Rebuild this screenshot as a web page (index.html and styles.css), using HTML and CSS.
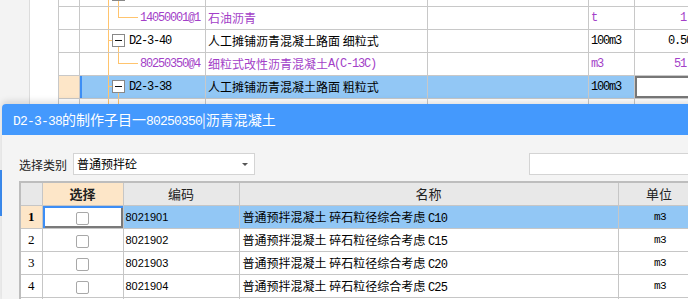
FILE: index.html
```html
<!DOCTYPE html>
<html lang="zh-CN">
<head>
    <meta charset="UTF-8">
    <title>制作子目</title>
    <link rel="stylesheet" href="styles.css">
</head>
<body>
    <div class="page">
        <aside class="side"><div class="side-mark"></div></aside>
        <div class="gutter"></div>
        <!-- main quota tree grid -->
        <table class="tree-grid">
            <colgroup>
                <col class="c-no"><col class="c-code"><col class="c-name"><col class="c-spec"><col class="c-unit"><col class="c-qty">
            </colgroup>
            <tr>
                <td></td>
                <td class="tc"><span class="ln"></span><span class="hz"></span><span class="box"></span><span class="dn"></span></td>
                <td></td><td></td><td></td><td></td>
            </tr>
            <tr class="mat">
                <td></td>
                <td class="tc child"><span class="ln"></span><span class="elbow"></span><span class="mono">14050001@1</span></td>
                <td class="nm">石油沥青</td>
                <td></td>
                <td class="unit"><span class="mono">t</span></td>
                <td class="qty"><span class="mono">1</span></td>
            </tr>
            <tr>
                <td></td>
                <td class="tc"><span class="ln"></span><span class="hz"></span><span class="box"></span><span class="dn"></span><span class="mono">D2-3-40</span></td>
                <td class="nm">人工摊铺沥青混凝土路面 细粒式</td>
                <td></td>
                <td class="unit"><span class="mono">100m3</span></td>
                <td class="qty cut"><span class="mono">0.50</span></td>
            </tr>
            <tr class="mat">
                <td></td>
                <td class="tc child"><span class="ln"></span><span class="elbow"></span><span class="mono">80250350@4</span></td>
                <td class="nm">细粒式改性沥青混凝土<span class="mono">A(C-13C)</span></td>
                <td></td>
                <td class="unit"><span class="mono">m3</span></td>
                <td class="qty"><span class="mono">51</span></td>
            </tr>
            <tr class="sel">
                <td class="no"></td>
                <td class="tc first"><span class="ln"></span><span class="hz"></span><span class="box"></span><span class="dn"></span><span class="mono">D2-3-38</span></td>
                <td class="nm">人工摊铺沥青混凝土路面 粗粒式</td>
                <td></td>
                <td class="unit"><span class="mono">100m3</span></td>
                <td class="edit"></td>
            </tr>
            <tr>
                <td></td>
                <td class="tc"><span class="ln"></span><span class="dn top"></span></td>
                <td></td><td></td><td></td><td></td>
            </tr>
        </table>
    </div>

    <div class="dialog">
        <div class="dlg-title"><span class="mono-t">D2-3-38</span>的制作子目一<span class="mono-t">80250350</span>|沥青混凝土</div>
        <div class="dlg-body">
            <div class="filter">
                <label>选择类别</label>
                <div class="select">普通预拌砼<span class="arrow"></span></div>
                <div class="search"></div>
            </div>
            <table class="pick-grid">
                <colgroup>
                    <col class="p-no"><col class="p-chk"><col class="p-code"><col class="p-name"><col class="p-unit">
                </colgroup>
                <tr class="head">
                    <th></th>
                    <th class="hot">选择</th>
                    <th>编码</th>
                    <th>名称</th>
                    <th>单位</th>
                </tr>
                <tr class="cur">
                    <td class="no">1</td>
                    <td class="chk"><span class="cb"></span></td>
                    <td class="code">8021901</td>
                    <td class="name">普通预拌混凝土 碎石粒径综合考虑 <span class="mono">C10</span></td>
                    <td class="unit">m3</td>
                </tr>
                <tr>
                    <td class="no">2</td>
                    <td class="chk"><span class="cb"></span></td>
                    <td class="code">8021902</td>
                    <td class="name">普通预拌混凝土 碎石粒径综合考虑 <span class="mono">C15</span></td>
                    <td class="unit">m3</td>
                </tr>
                <tr>
                    <td class="no">3</td>
                    <td class="chk"><span class="cb"></span></td>
                    <td class="code">8021903</td>
                    <td class="name">普通预拌混凝土 碎石粒径综合考虑 <span class="mono">C20</span></td>
                    <td class="unit">m3</td>
                </tr>
                <tr>
                    <td class="no">4</td>
                    <td class="chk"><span class="cb"></span></td>
                    <td class="code">8021904</td>
                    <td class="name">普通预拌混凝土 碎石粒径综合考虑 <span class="mono">C25</span></td>
                    <td class="unit">m3</td>
                </tr>
                <tr>
                    <td class="no">5</td>
                    <td class="chk"><span class="cb"></span></td>
                    <td class="code">8021905</td>
                    <td class="name">普通预拌混凝土 碎石粒径综合考虑 <span class="mono">C30</span></td>
                    <td class="unit">m3</td>
                </tr>
            </table>
        </div>
    </div>
</body>
</html>
```

FILE: styles.css
```css
* {
    box-sizing: border-box;
}
body {
    margin: 0;
    width: 688px;
    height: 299px;
    overflow: hidden;
    position: relative;
    background: #fff;
    font-family: "Noto Sans CJK SC", sans-serif;
    font-size: 12px;
    color: #000;
}

.page {
    display: flex;
    align-items: flex-start;
    height: 299px;
    overflow: hidden;
}
.side {
    width: 30px;
    height: 299px;
    flex: none;
    background: #f3f3f3;
    border-right: 1px solid #dcdcdc;
}
.side-mark {
    margin-top: 170px;
    width: 2px;
    height: 46px;
    background: #3d8ef5;
}
.gutter {
    width: 28px;
    flex: none;
}

.mono {
    font-family: "Liberation Mono", monospace;
    font-size: 12px;
    letter-spacing: -1.2px;
}

/* tree grid */
.tree-grid {
    border-collapse: collapse;
    table-layout: fixed;
    width: 642px;
    flex: none;
    margin-top: -17px;
}
.tree-grid td {
    height: 23px;
    padding: 0;
    border: 1px solid #c8c8c8;
    white-space: nowrap;
    overflow: hidden;
    line-height: 20px;
}
.tree-grid .mono {
    display: inline-block;
    vertical-align: top;
    line-height: 21px;
}
.c-no { width: 21px; }
.c-code { width: 126px; }
.c-name { width: 222px; }
.c-spec { width: 161px; }
.c-unit { width: 46px; }
.c-qty { width: 66px; }

.nm {
    padding-left: 2px !important;
}
.unit {
    padding-left: 2px !important;
}
.qty {
    text-align: right;
    padding-right: 14px !important;
}
.qty.cut {
    text-align: left;
    padding-left: 33px !important;
}
.mat td {
    color: #a33fc8;
}

.tc {
    position: relative;
    padding-left: 49px !important;
}
.tc.child {
    padding-left: 60px !important;
}
.ln, .hz, .dn, .elbow, .box {
    position: absolute;
}
.ln {
    left: 28px;
    top: -1px;
    bottom: -1px;
    width: 1px;
    background: #ffc46e;
}
.hz {
    left: 29px;
    top: 10px;
    width: 4px;
    height: 1px;
    background: #ffc46e;
}
.box {
    left: 32px;
    top: 4px;
    width: 13px;
    height: 13px;
    border: 1px solid #888;
    background: #fff;
}
.box::after {
    content: "";
    position: absolute;
    left: 2px;
    top: 5px;
    width: 7px;
    height: 1px;
    background: #111;
}
.dn {
    left: 38px;
    top: 17px;
    bottom: -1px;
    width: 1px;
    background: #ffc46e;
}
.dn.top {
    top: -1px;
}
.elbow {
    left: 38px;
    top: -1px;
    width: 20px;
    height: 12px;
    border-left: 1px solid #ffc46e;
    border-bottom: 1px solid #ffc46e;
}

.sel td {
    background: #92c7f5;
}
.sel td.no {
    background: #fde6c8;
}
.sel td.first {
    box-shadow: inset 2px 0 0 #3d8ef5;
}
.sel td.edit {
    background: #fff;
    box-shadow: inset 0 0 0 2px #777;
}

/* dialog */
.dialog {
    position: absolute;
    left: 2px;
    top: 104px;
    width: 700px;
    height: 200px;
    background: #f4f4f4;
    border-radius: 4px 4px 0 0;
    box-shadow: 0 -3px 6px rgba(0, 0, 0, 0.12);
    overflow: hidden;
}
.dlg-title {
    height: 31px;
    line-height: 31px;
    padding-left: 11px;
    background: #4499fd;
    color: #fff;
    font-size: 14px;
    white-space: nowrap;
}
.mono-t {
    font-family: "Liberation Mono", monospace;
    font-size: 13px;
    letter-spacing: -0.8px;
}
.dlg-body {
    padding: 18px 0 0 17px;
}
.filter {
    display: flex;
    align-items: center;
    height: 22px;
}
.filter label {
    width: 54px;
    color: #222;
}
.select {
    position: relative;
    width: 182px;
    height: 22px;
    line-height: 20px;
    padding-left: 3px;
    background: #fff;
    border: 1px solid #d4d4d4;
}
.arrow {
    position: absolute;
    right: 6px;
    top: 9px;
    border-left: 3px solid transparent;
    border-right: 3px solid transparent;
    border-top: 3px solid #555;
}
.search {
    margin-left: auto;
    width: 173px;
    height: 22px;
    background: #fff;
    border: 1px solid #d4d4d4;
}

.pick-grid {
    margin-top: 6px;
    border-collapse: collapse;
    table-layout: fixed;
    width: 680px;
    border-top: 2px solid #bdbdbd;
    border-left: 2px solid #bdbdbd;
}
.p-no { width: 22px; }
.p-chk { width: 81px; }
.p-code { width: 116px; }
.p-name { width: 379px; }
.p-unit { width: 82px; }

.pick-grid th,
.pick-grid td {
    height: 23px;
    padding: 0;
    border: 1px solid #c6c6c6;
    white-space: nowrap;
    overflow: hidden;
    background: #fff;
}
.pick-grid th {
    background: #e8e8e8;
    font-weight: normal;
    font-size: 13px;
    color: #222;
}
.pick-grid th.hot {
    background: #fde6c8;
    font-weight: bold;
}
.pick-grid .no {
    text-align: center;
    font-family: "Liberation Serif", serif;
    font-size: 13px;
}
.pick-grid .chk {
    text-align: center;
}
.cb {
    display: inline-block;
    width: 13px;
    height: 13px;
    border: 1px solid #a8a8a8;
    border-radius: 2px;
    background: #fff;
    vertical-align: middle;
}
.pick-grid .code {
    padding-left: 2px;
    font-family: "Liberation Sans", sans-serif;
    font-size: 11px;
}
.pick-grid .name {
    padding-left: 3px;
}
.pick-grid .name .mono {
    font-size: 12px;
    letter-spacing: -0.8px;
}
.pick-grid .unit {
    text-align: center;
    font-family: "Liberation Mono", monospace;
    font-size: 11px;
    letter-spacing: -0.6px;
}
.cur td {
    background: #92c7f5;
}
.cur td.no {
    background: #fde6c8;
    font-weight: bold;
}
.cur td.chk {
    background: #fff;
    box-shadow: inset 2px 2px 0 #3d8ef5, inset -2px -2px 0 #7a7a7a;
}
```
